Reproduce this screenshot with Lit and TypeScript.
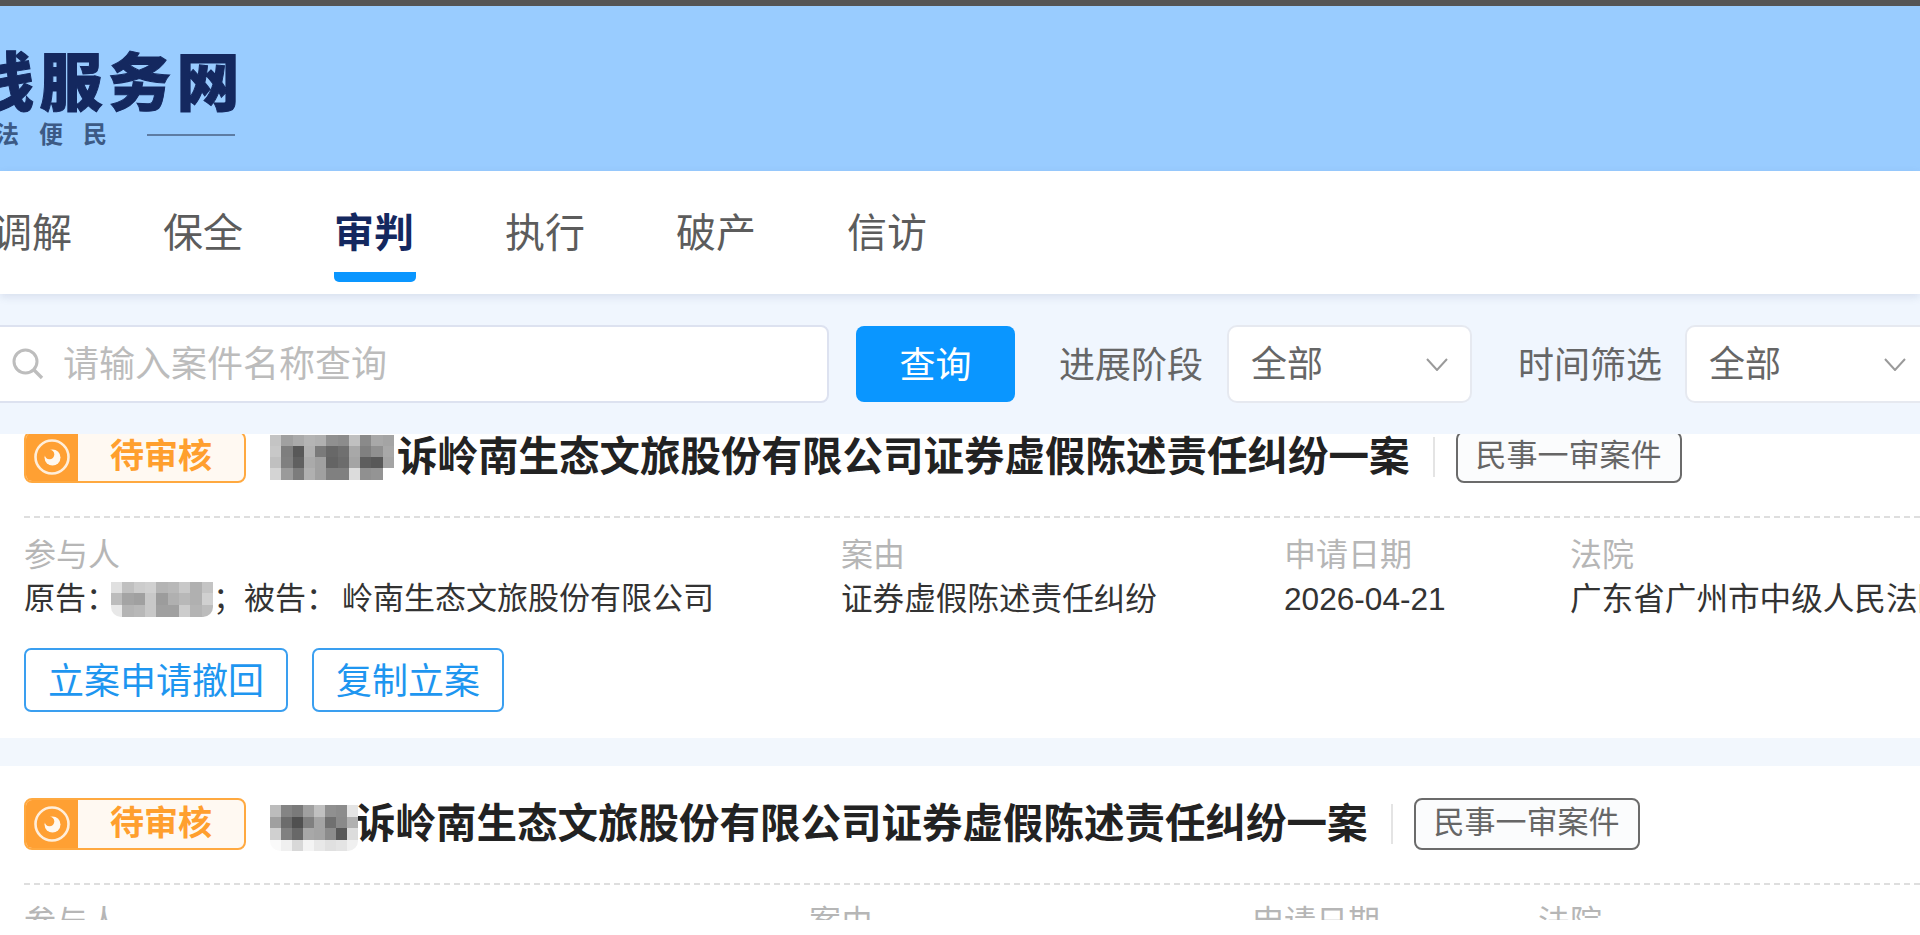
import { LitElement, css, html } from 'lit';

const mosaic = (rows: string[][], width: number, height: number, round = false) => html`
  <div
    class="mosaic ${round ? 'round' : ''}"
    style="width:${width}px;height:${height}px;grid-template-columns:repeat(${rows[0].length},1fr);grid-template-rows:repeat(${rows.length},1fr)"
  >
    ${rows.flat().map((c) => html`<i style="background:#${c}"></i>`)}
  </div>
`;

const CASES = [
  {
    titleMosaic: [
      ['c4c4c4', 'a0a0a0', 'aaaaaa', 'b4b4b4', 'b0b0b0', '909090', '8c8c8c', 'c0c0c0', '8a8a8a', 'a8a8a8', 'a4a4a4'],
      ['c8c8c8', '7e7e7e', '585858', 'b0b0b0', '7a7a7a', '686868', '707070', 'a8a8a8', '808080', '909090', 'a8a8a8'],
      ['c0c0c0', '808080', '606060', 'aaaaaa', 'a0a0a0', '646464', '6c6c6c', 'a4a4a4', '5e5e5e', '585858', 'a4a4a4'],
      ['d4d4d4', '9a9a9a', '7c7c7c', 'b0b0b0', 'a0a0a0', '808080', '808080', 'dcdcdc', '909090', '949494', 'ffffff'],
    ],
    titleW: 124,
    titleH: 45,
    down: false,
    nameMosaic: [
      ['e0e0e0', 'c0c0c0', 'cccccc', 'd0d0d0', 'b4b4b4', 'b8b8b8', 'c8c8c8', 'b0b0b0', 'c4c4c4'],
      ['bcbcbc', 'a4a4a4', 'a0a0a0', 'c8c8c8', '9c9c9c', 'b0b0b0', 'b8b8b8', 'b0b0b0', 'd0d0d0'],
      ['e8e8e8', 'b4b4b4', 'b8b8b8', 'c8c8c8', 'a0a0a0', 'a0a0a0', 'cccccc', 'b4b4b4', 'bcbcbc'],
    ],
    nameW: 102,
  },
  {
    titleMosaic: [
      ['bcbcbc', '848484', '7a7a7a', 'a0a0a0', 'c0c0c0', '909090', '8c8c8c', 'e4e4e4'],
      ['a0a0a0', '6c6c6c', '505050', '808080', 'a4a4a4', '707070', '8a8a8a', 'b0b0b0'],
      ['d0d0d0', '808080', '686868', 'a8a8a8', 'a4a4a4', '8c8c8c', '585858', 'dcdcdc'],
      ['fafafa', 'f0f0f0', 'd8d8d8', 'f4f4f4', 'e8e8e8', 'e0e0e0', 'e4e4e4', 'f0f0f0'],
    ],
    titleW: 88,
    titleH: 46,
    down: true,
    nameMosaic: [
      ['e0e0e0', 'c0c0c0', 'cccccc', 'd0d0d0', 'b4b4b4', 'b8b8b8'],
      ['bcbcbc', 'a4a4a4', 'a0a0a0', 'c8c8c8', '9c9c9c', 'b0b0b0'],
      ['e8e8e8', 'b4b4b4', 'b8b8b8', 'c8c8c8', 'a0a0a0', 'a0a0a0'],
    ],
    nameW: 70,
  },
];

export class CaseCard extends LitElement {
  static properties = {
    data: { type: Object },
  };

  declare data: (typeof CASES)[number];

  render() {
    const d = this.data;
    return html`
      <div class="card">
        <div class="head">
          <div class="badge">
            <span class="badge-icon">
              <svg width="38" height="38" viewBox="0 0 38 38">
                <circle cx="19" cy="19" r="16.5" fill="none" stroke="#ffeeda" stroke-width="2.6"></circle>
                <circle cx="19.5" cy="19.5" r="8" fill="#fff8ef"></circle>
                <circle cx="16.5" cy="16.5" r="4.8" fill="#ffa033"></circle>
              </svg>
            </span>
            <span class="badge-text">待审核</span>
          </div>
          <div class="title-blur ${d.down ? 'down' : ''}">${mosaic(d.titleMosaic, d.titleW, d.titleH, d.down)}</div>
          <div class="title">诉岭南生态文旅股份有限公司证券虚假陈述责任纠纷一案</div>
          <span class="sep"></span>
          <span class="tag">民事一审案件</span>
        </div>
        <div class="info">
          <div class="col first">
            <div class="label">参与人</div>
            <div class="value">
              原告：<span class="name">${mosaic(d.nameMosaic, d.nameW, 35, true)}</span>；被告：<span class="party">岭南生态文旅股份有限公司</span>
            </div>
          </div>
          <div class="col reason">
            <div class="label">案由</div>
            <div class="value">证券虚假陈述责任纠纷</div>
          </div>
          <div class="col date">
            <div class="label">申请日期</div>
            <div class="value">2026-04-21</div>
          </div>
          <div class="col">
            <div class="label">法院</div>
            <div class="value">广东省广州市中级人民法院</div>
          </div>
        </div>
        <div class="actions">
          <button>立案申请撤回</button>
          <button>复制立案</button>
        </div>
      </div>
    `;
  }

  static styles = css`
    :host {
      display: block;
      font-family: "Liberation Sans", "Noto Sans CJK SC", sans-serif;
    }
    .card {
      background: #fff;
      padding: 32px 0 26px 24px;
      overflow: hidden;
    }
    .head {
      display: flex;
      align-items: center;
      height: 52px;
      white-space: nowrap;
    }
    .badge {
      display: flex;
      box-sizing: border-box;
      flex: none;
      width: 222px;
      height: 52px;
      border: 2px solid #ffa940;
      border-radius: 8px;
      background: #fff9f2;
      overflow: hidden;
    }
    .badge-icon {
      display: flex;
      align-items: center;
      justify-content: center;
      width: 52px;
      background: #ffa033;
    }
    .badge-text {
      flex: 1;
      text-align: center;
      font-size: 34px;
      line-height: 46px;
      font-weight: 700;
      color: #ff9f2e;
    }
    .title-blur {
      flex: none;
      margin-left: 24px;
      margin-right: 3px;
    }
    .title-blur.down {
      margin-top: 8px;
      margin-right: -3px;
    }
    .mosaic {
      display: grid;
      overflow: hidden;
      filter: blur(0.5px);
    }
    .mosaic.round {
      border-radius: 0 0 10px 10px;
    }
    .title {
      font-size: 40.5px;
      font-weight: 700;
      line-height: 52px;
      color: #222;
    }
    .sep {
      flex: none;
      width: 2px;
      height: 40px;
      margin: 0 21px 0 23px;
      background: #e4e4e4;
    }
    .tag {
      box-sizing: border-box;
      flex: none;
      height: 52px;
      padding: 0 18px;
      border: 2px solid #6b6b6b;
      border-radius: 8px;
      background: #fbfcfd;
      font-size: 31px;
      line-height: 46px;
      color: #666;
    }
    .info {
      display: flex;
      margin-top: 33px;
      padding-top: 15px;
      border-top: 2px dashed #dedede;
      white-space: nowrap;
      font-size: 31.6px;
      line-height: 44px;
    }
    .col {
      flex: none;
    }
    .col.first {
      margin-right: 127px;
    }
    .col.first .value {
      font-size: 31px;
    }
    .col.reason {
      width: 443px;
    }
    .col.date {
      width: 286px;
    }
    .label {
      font-size: 32px;
      color: #b6b6b6;
    }
    .value {
      display: flex;
      align-items: center;
      color: #333;
    }
    .name {
      margin-left: -6px;
    }
    .party {
      margin-left: 5px;
    }
    .actions {
      display: flex;
      gap: 24px;
      margin-top: 27px;
    }
    button {
      box-sizing: border-box;
      height: 64px;
      padding: 0 22px 4px;
      border: 2px solid #3a9ff0;
      border-radius: 7px;
      background: #fff;
      font: inherit;
      font-size: 36px;
      color: #1e96f0;
    }
  `;
}
window.customElements.define('case-card', CaseCard);

export class AppRoot extends LitElement {
  render() {
    const tabs = ['调解', '保全', '审判', '执行', '破产', '信访'];
    const chevron = html`
      <svg width="22" height="13" viewBox="0 0 22 13">
        <polyline points="1,1 11,12 21,1" fill="none" stroke="#9a9a9a" stroke-width="2"></polyline>
      </svg>
    `;
    return html`
      <div class="page">
        <header class="banner">
          <div class="brand">
            <div class="brand-name">线服务网</div>
            <div class="brand-sub">
              <span>法便民</span>
              <i></i>
            </div>
          </div>
        </header>
        <nav class="tabs">
          ${tabs.map((t) => html`<a class="tab ${t === '审判' ? 'active' : ''}">${t}</a>`)}
        </nav>
        <div class="filters">
          <label class="search">
            <svg width="32" height="32" viewBox="0 0 32 32">
              <circle cx="13.5" cy="13.5" r="11.5" fill="none" stroke="#bdbdbd" stroke-width="3"></circle>
              <line x1="22" y1="22" x2="30" y2="30" stroke="#bdbdbd" stroke-width="3.4"></line>
            </svg>
            <input placeholder="请输入案件名称查询" />
          </label>
          <button class="query">查询</button>
          <span class="flabel first">进展阶段</span>
          <div class="select"><span>全部</span>${chevron}</div>
          <span class="flabel">时间筛选</span>
          <div class="select"><span>全部</span>${chevron}</div>
        </div>
        <div class="list">
          <div class="list-inner">
            ${CASES.map((c) => html`<case-card .data=${c}></case-card>`)}
          </div>
        </div>
      </div>
    `;
  }

  static styles = css`
    :host {
      display: block;
      height: 935px;
      background: #fff;
      overflow: hidden;
      font-family: "Liberation Sans", "Noto Sans CJK SC", sans-serif;
    }
    .page {
      width: 1920px;
    }
    .banner {
      box-sizing: border-box;
      height: 171px;
      padding-top: 47px;
      border-top: 6px solid #555;
      background: #99ccff;
      overflow: hidden;
    }
    .brand {
      width: 264px;
      margin-left: -29px;
    }
    .brand-name {
      font-size: 63px;
      line-height: 60px;
      font-weight: 900;
      letter-spacing: 5.5px;
      white-space: nowrap;
      color: #14285f;
      -webkit-text-stroke: 1px #14285f;
    }
    .brand-sub {
      display: flex;
      align-items: center;
      height: 24px;
      margin-top: 7px;
      padding-left: 24px;
      font-size: 24px;
      font-weight: 700;
      letter-spacing: 20px;
      color: #3c5a85;
    }
    .brand-sub i {
      width: 88px;
      height: 2px;
      margin-top: 6px;
      margin-left: 20px;
      background: #5d7ca3;
    }
    .tabs {
      position: relative;
      display: flex;
      gap: 91px;
      height: 123px;
      background: #fff;
      box-shadow: 0 3px 8px rgba(70, 90, 140, 0.14);
    }
    .tab {
      flex: none;
      box-sizing: border-box;
      width: 80px;
      height: 111px;
      padding-top: 42px;
      font-size: 40px;
      line-height: 40px;
      color: #5c5c5c;
    }
    .tab:first-child {
      margin-left: -8px;
    }
    .tab.active {
      width: 82px;
      margin-right: -2px;
      border-bottom: 10px solid #0a96ff;
      border-radius: 0 0 5px 5px;
      font-weight: 700;
      color: #14285f;
    }
    .filters {
      display: flex;
      align-items: center;
      box-sizing: border-box;
      height: 140px;
      background: #f0f6fe;
    }
    .search {
      display: flex;
      align-items: center;
      flex: none;
      box-sizing: border-box;
      width: 849px;
      height: 78px;
      margin-left: -20px;
      padding-left: 30px;
      border: 2px solid #dde2f0;
      border-radius: 8px;
      background: #fff;
    }
    input {
      flex: 1;
      min-width: 0;
      margin: 2px 0 0 19px;
      padding: 0;
      border: 0;
      outline: 0;
      font: inherit;
      font-size: 36px;
    }
    input::placeholder {
      color: #bcbcbc;
    }
    .query {
      flex: none;
      width: 159px;
      height: 76px;
      margin-left: 27px;
      padding-bottom: 6px;
      border: 0;
      border-radius: 8px;
      background: #0a96ff;
      font: inherit;
      font-size: 36px;
      color: #fff;
    }
    .flabel {
      flex: none;
      width: 144px;
      margin: 0 23px 4px 46px;
      font-size: 36px;
      color: #666;
    }
    .flabel.first {
      margin-left: 44px;
      margin-right: 24px;
    }
    .select {
      display: flex;
      align-items: center;
      justify-content: space-between;
      flex: none;
      box-sizing: border-box;
      width: 245px;
      height: 78px;
      padding: 0 22px;
      border: 2px solid #e6e9f0;
      border-radius: 10px;
      background: #fff;
      font-size: 36px;
      color: #666;
    }
    .select span {
      margin-bottom: 6px;
    }
    .list {
      height: 486px;
      overflow: hidden;
      background: #f2f7fd;
    }
    .list-inner {
      display: flex;
      flex-direction: column;
      gap: 28px;
      margin-top: -35px;
    }
  `;
}
window.customElements.define('app-root', AppRoot);
